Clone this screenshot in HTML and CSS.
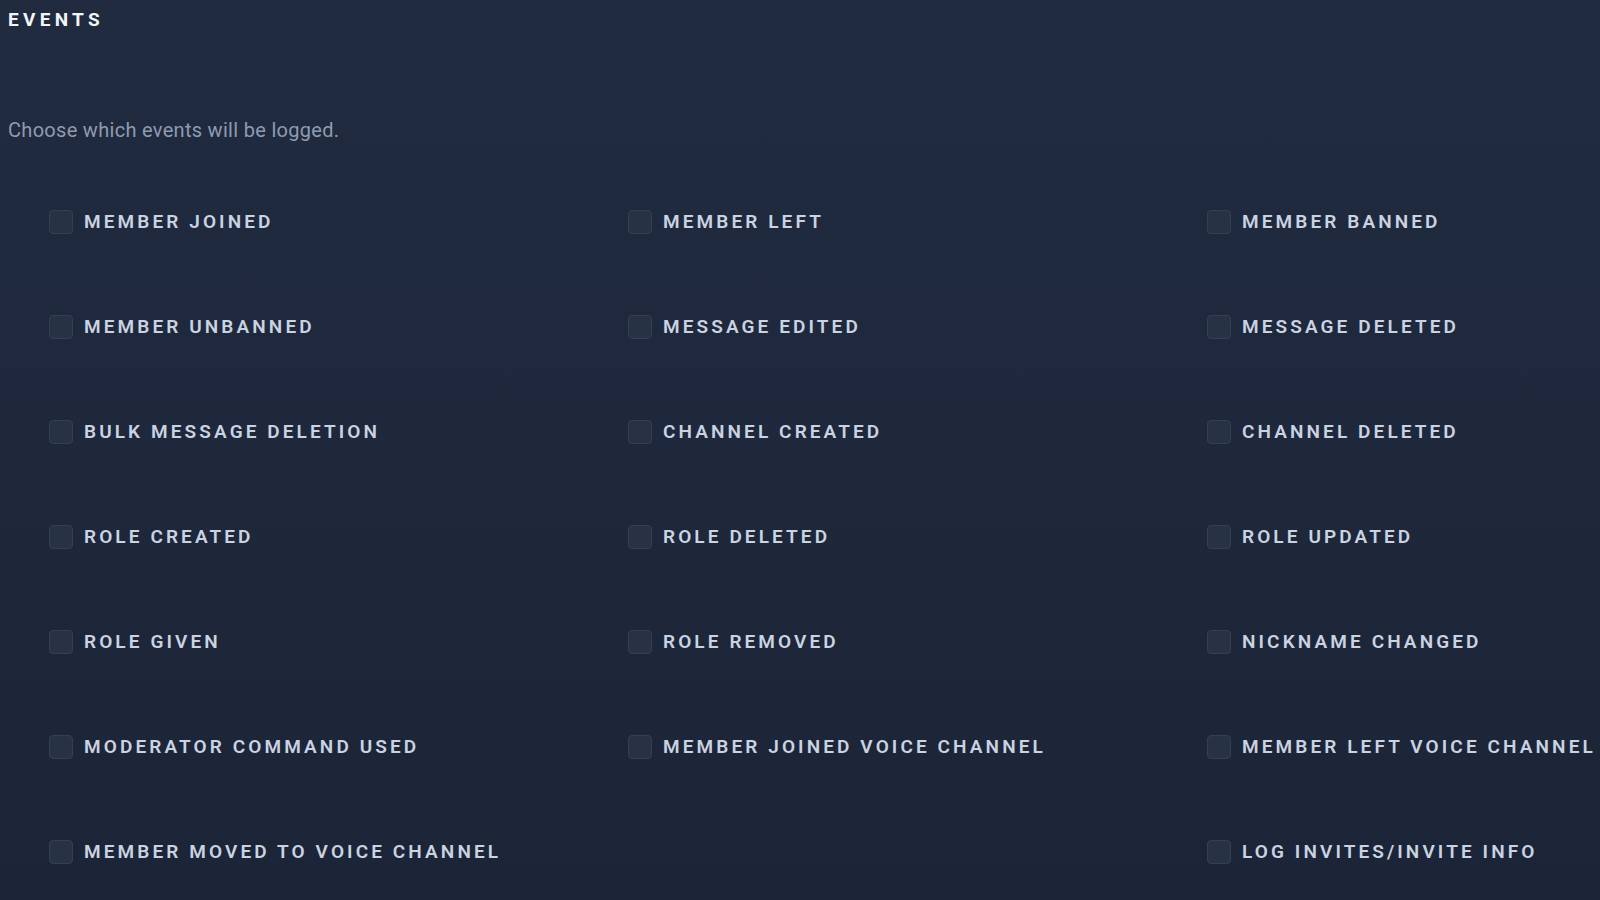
FILE: index.html
```html
<!doctype html>
<html lang="en">
  <head>
    <meta charset="UTF-8" />
    <meta name="viewport" content="width=device-width, initial-scale=1.0" />
    <title>Logging Events</title>
    <link rel="stylesheet" href="styles.css">
  </head>
  <body>
    <div class="panel">
      <h2 class="panel-title">EVENTS</h2>
      <p class="panel-desc">Choose which events will be logged.</p>
      <div class="event-grid">
        <label class="event"><input type="checkbox" /><span class="box"></span><span class="event-name">MEMBER JOINED</span></label>
        <label class="event"><input type="checkbox" /><span class="box"></span><span class="event-name">MEMBER LEFT</span></label>
        <label class="event"><input type="checkbox" /><span class="box"></span><span class="event-name">MEMBER BANNED</span></label>

        <label class="event"><input type="checkbox" /><span class="box"></span><span class="event-name">MEMBER UNBANNED</span></label>
        <label class="event"><input type="checkbox" /><span class="box"></span><span class="event-name">MESSAGE EDITED</span></label>
        <label class="event"><input type="checkbox" /><span class="box"></span><span class="event-name">MESSAGE DELETED</span></label>

        <label class="event"><input type="checkbox" /><span class="box"></span><span class="event-name">BULK MESSAGE DELETION</span></label>
        <label class="event"><input type="checkbox" /><span class="box"></span><span class="event-name">CHANNEL CREATED</span></label>
        <label class="event"><input type="checkbox" /><span class="box"></span><span class="event-name">CHANNEL DELETED</span></label>

        <label class="event"><input type="checkbox" /><span class="box"></span><span class="event-name">ROLE CREATED</span></label>
        <label class="event"><input type="checkbox" /><span class="box"></span><span class="event-name">ROLE DELETED</span></label>
        <label class="event"><input type="checkbox" /><span class="box"></span><span class="event-name">ROLE UPDATED</span></label>

        <label class="event"><input type="checkbox" /><span class="box"></span><span class="event-name">ROLE GIVEN</span></label>
        <label class="event"><input type="checkbox" /><span class="box"></span><span class="event-name">ROLE REMOVED</span></label>
        <label class="event"><input type="checkbox" /><span class="box"></span><span class="event-name">NICKNAME CHANGED</span></label>

        <label class="event"><input type="checkbox" /><span class="box"></span><span class="event-name">MODERATOR COMMAND USED</span></label>
        <label class="event"><input type="checkbox" /><span class="box"></span><span class="event-name">MEMBER JOINED VOICE CHANNEL</span></label>
        <label class="event"><input type="checkbox" /><span class="box"></span><span class="event-name">MEMBER LEFT VOICE CHANNEL</span></label>

        <label class="event"><input type="checkbox" /><span class="box"></span><span class="event-name">MEMBER MOVED TO VOICE CHANNEL</span></label>
        <div class="event-empty"></div>
        <label class="event"><input type="checkbox" /><span class="box"></span><span class="event-name">LOG INVITES/INVITE INFO</span></label>
      </div>
    </div>
  </body>
</html>
```

FILE: styles.css
```css
body {
  margin: 0;
  height: 100vh;
  overflow: hidden;
  font-family: Roboto, "Liberation Sans", sans-serif;
  background: linear-gradient(180deg, #212b40 0%, #1c2537 100%);
}
.panel {
  padding-left: 8px;
}
.panel-title {
  margin: 0;
  font-size: 19px;
  font-weight: 700;
  letter-spacing: 4.3px;
  line-height: 40px;
  color: #f1f5f9;
}
.panel-desc {
  margin: 78px 0 0;
  font-size: 20px;
  letter-spacing: 0.3px;
  line-height: 24px;
  color: #8e9bb0;
}
.event-grid {
  display: grid;
  grid-template-columns: 579px 579px 1fr;
  grid-auto-rows: 105px;
  padding-left: 41px;
  margin-top: 27px;
}
.event {
  display: flex;
  align-items: center;
  gap: 11px;
  cursor: pointer;
  white-space: nowrap;
}
.event input {
  display: none;
}
.box {
  width: 22px;
  height: 22px;
  flex: none;
  border: 1px solid #343f54;
  border-radius: 4px;
  background-color: #283245;
}
.event input:checked + .box {
  background-color: #5865f2;
  border-color: #5865f2;
}
.event-name {
  font-size: 19px;
  font-weight: 600;
  letter-spacing: 3.1px;
  color: #cad3e2;
}
```
